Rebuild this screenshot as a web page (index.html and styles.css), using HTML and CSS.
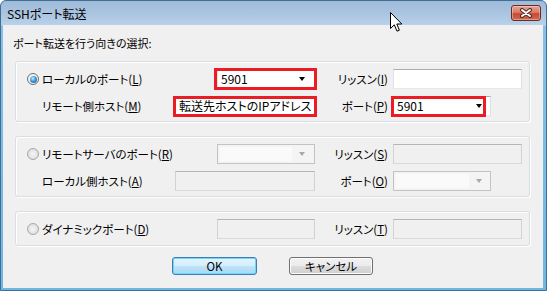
FILE: index.html
```html
<!DOCTYPE html>
<html lang="ja">
<head>
  <meta charset="UTF-8" />
  <title>SSHポート転送</title>
  <link rel="stylesheet" href="styles.css">
</head>
<body>

  <div class="window">
    <!-- Title bar -->
    <div class="titlebar">
      <span class="title">SSHポート転送</span>
      <span class="close">
        <svg width="14" height="10" viewBox="0 0 14 10">
          <path d="M3 2 L11 8 M11 2 L3 8" stroke="#4a2a25" stroke-width="4" stroke-linecap="round"/>
          <path d="M3 2 L11 8 M11 2 L3 8" stroke="#fff" stroke-width="2" stroke-linecap="round"/>
        </svg>
      </span>
    </div>

    <div class="client">
      <div class="caption">ポート転送を行う向きの選択:</div>

      <!-- Local forwarding -->
      <div class="group">
        <label class="opt"><span class="radio checked"></span><span>ローカルのポート(<u>L</u>)</span></label>
        <div class="combo narrow mark mark-a"><span class="val">5901</span><i class="arrow"></i></div>
        <label class="side">リッスン(<u>I</u>)</label>
        <div class="edit"></div>

        <label class="sub">リモート側ホスト(<u>M</u>)</label>
        <div class="edit mark mark-b"><span class="val">転送先ホストのIPアドレス</span></div>
        <label class="side">ポート(<u>P</u>)</label>
        <div class="combo port mark mark-c"><span class="val">5901</span><i class="arrow"></i></div>
      </div>

      <!-- Remote forwarding -->
      <div class="group">
        <label class="opt"><span class="radio"></span><span>リモートサーバのポート(<u>R</u>)</span></label>
        <div class="combo narrow off"><span class="val"></span><i class="arrow"></i></div>
        <label class="side">リッスン(<u>S</u>)</label>
        <div class="edit off"></div>

        <label class="sub">ローカル側ホスト(<u>A</u>)</label>
        <div class="edit off"></div>
        <label class="side">ポート(<u>O</u>)</label>
        <div class="combo port off"><span class="val"></span><i class="arrow"></i></div>
      </div>

      <!-- Dynamic forwarding -->
      <div class="group last">
        <label class="opt"><span class="radio"></span><span>ダイナミックポート(<u>D</u>)</span></label>
        <div class="edit narrow off"></div>
        <label class="side">リッスン(<u>T</u>)</label>
        <div class="edit off"></div>
      </div>

      <div class="buttons">
        <button class="btn default">OK</button>
        <button class="btn cancel">キャンセル</button>
      </div>
    </div>

    <svg class="cursor" width="13" height="21" viewBox="0 0 13 21">
      <path d="M0.5 0.5 L0.5 16.5 L4.3 12.8 L7 19.2 L9.4 18.2 L6.8 12 L11.8 12 Z" fill="#fff" stroke="#000" stroke-width="1"/>
    </svg>
  </div>

</body>
</html>
```

FILE: styles.css
```css
* {
  box-sizing: border-box;
}

body {
  margin: 0;
  background: #fff;
  font-family: "Noto Sans CJK JP", "Noto Sans", sans-serif;
  font-size: 11px;
  font-feature-settings: "palt";
  color: #000;
}

.window {
  position: relative;
  width: 547px;
  height: 291px;
  display: flex;
  flex-direction: column;
  border: 1px solid #3f6f95;
  border-radius: 6px 6px 0 0;
  background: linear-gradient(#9fbbd9 0, #aac4e0 12px, #b9d1ea 24px, #86c0e6 25px, #6fb6e2 100%);
}

.titlebar {
  height: 24px;
  display: flex;
  justify-content: space-between;
  align-items: flex-start;
  padding: 4px 5px 0 6px;
}

.title {
  margin-top: 1px;
  line-height: 16px;
  font-size: 12px;
  color: #000;
}

.close {
  width: 30px;
  height: 16px;
  display: flex;
  align-items: center;
  justify-content: center;
  border: 1px solid #6b2a20;
  border-radius: 3px;
  background: linear-gradient(#e8a494 0%, #dc7b67 45%, #c9492f 55%, #d06a4f 100%);
  box-shadow: inset 0 0 0 1px rgba(255, 255, 255, 0.35);
}

.client {
  flex: 1;
  margin: 0 3px 2px 2px;
  background: #f0f0f0;
  padding: 10px 13px 0 12px;
}

.caption {
  line-height: 16px;
  margin-left: -2px;
}

/* Group boxes */
.group {
  margin-top: 14px;
  display: grid;
  grid-template-columns: 148px 140px 78px 129px;
  grid-auto-rows: 20px;
  row-gap: 7px;
  align-items: center;
  padding: 7px 7px 5px 11px;
  border: 1px solid #d5dfe5;
  border-radius: 3px;
  box-shadow: inset 1px 1px 0 #fff, 1px 1px 0 #fff;
  font-size: 11.5px;
}

.caption + .group {
  margin-top: 10px;
}

.group.last {
  padding-bottom: 6px;
}

.opt {
  display: flex;
  align-items: center;
  gap: 3px;
  white-space: nowrap;
  line-height: 16px;
}

.sub {
  padding-left: 15px;
  line-height: 16px;
  white-space: nowrap;
}

.side {
  text-align: right;
  padding-right: 5px;
  line-height: 16px;
  white-space: nowrap;
}

u {
  text-decoration: underline;
  text-underline-offset: 1px;
}

/* Radio buttons */
.radio {
  flex-shrink: 0;
  width: 12px;
  height: 12px;
  border-radius: 50%;
  border: 1px solid #a9a9a9;
  background: radial-gradient(circle at 50% 50%, #f6f6f6 0, #e3e3e3 60%, #cfcfcf 100%);
  display: flex;
  align-items: center;
  justify-content: center;
}

.radio.checked {
  border-color: #6f6f6f;
  background: radial-gradient(circle at 50% 50%, #fff 0, #f0f0f0 70%, #d8d8d8 100%);
}

.radio.checked::before {
  content: "";
  width: 7px;
  height: 7px;
  border-radius: 50%;
  background: radial-gradient(circle at 40% 35%, #c4f0ff 0, #3c9ae0 45%, #124f8c 100%);
}

/* Inputs */
.edit,
.combo {
  height: 20px;
  border: 1px solid;
  border-color: #abadb3 #dbdfe6 #e3e9ef #e2e3ea;
  background: #fff;
  display: flex;
  align-items: center;
  padding-left: 3px;
  font-size: 12px;
  line-height: 18px;
}

.narrow {
  width: 98px;
  justify-self: end;
}

.port {
  width: 98px;
}

.val {
  flex: 1;
  white-space: nowrap;
  overflow: hidden;
}

.arrow {
  width: 0;
  height: 0;
  margin-right: 9px;
  border-left: 3.5px solid transparent;
  border-right: 3.5px solid transparent;
  border-top: 4px solid #000;
}

.combo.port .arrow {
  margin-right: 8px;
}

.edit.off {
  background: #f0f0f0;
  border-color: #b5b5b5 #d2d2d2 #d9d9d9 #d2d2d2;
}

.combo.off {
  background: #f4f4f4;
  border-color: #c3c3c3;
  padding: 2px 0 2px 2px;
}

.combo.off .val {
  height: 14px;
  background: #fafafa;
  margin-right: 7px;
}

.combo.off .arrow {
  border-top-color: #a8a8a8;
}

/* Red annotation boxes */
.mark {
  position: relative;
}

.mark::after {
  content: "";
  position: absolute;
  border: 3px solid #ec1c24;
}

.mark-a::after {
  inset: -2px -3px -2px -4px;
}

.mark-b::after {
  inset: -1px -3px -2px -3px;
}

.mark-c::after {
  inset: -1px 4px -2px -3px;
}

/* Buttons */
.buttons {
  margin-top: 11px;
  display: flex;
  justify-content: center;
  gap: 32px;
}

.btn {
  height: 18px;
  width: 84px;
  padding: 0;
  font-family: inherit;
  font-size: 11.5px;
  font-weight: 400;
  font-feature-settings: "palt";
  line-height: 16px;
  color: #000;
  border: 1px solid #707070;
  border-radius: 3px;
  background: linear-gradient(#f2f2f2 0%, #ebebeb 50%, #dddddd 50%, #cfcfcf 100%);
  box-shadow: inset 0 0 0 1px #fcfcfc;
}

.btn.default {
  width: 85px;
  border-color: #3c7fb1;
  background: linear-gradient(#e5f4fc 0%, #d4edfb 50%, #bde4fa 50%, #a6d8f4 100%);
  box-shadow: inset 0 0 0 1px #6fd6fb;
}

.cursor {
  position: absolute;
  left: 389px;
  top: 11px;
}
```
